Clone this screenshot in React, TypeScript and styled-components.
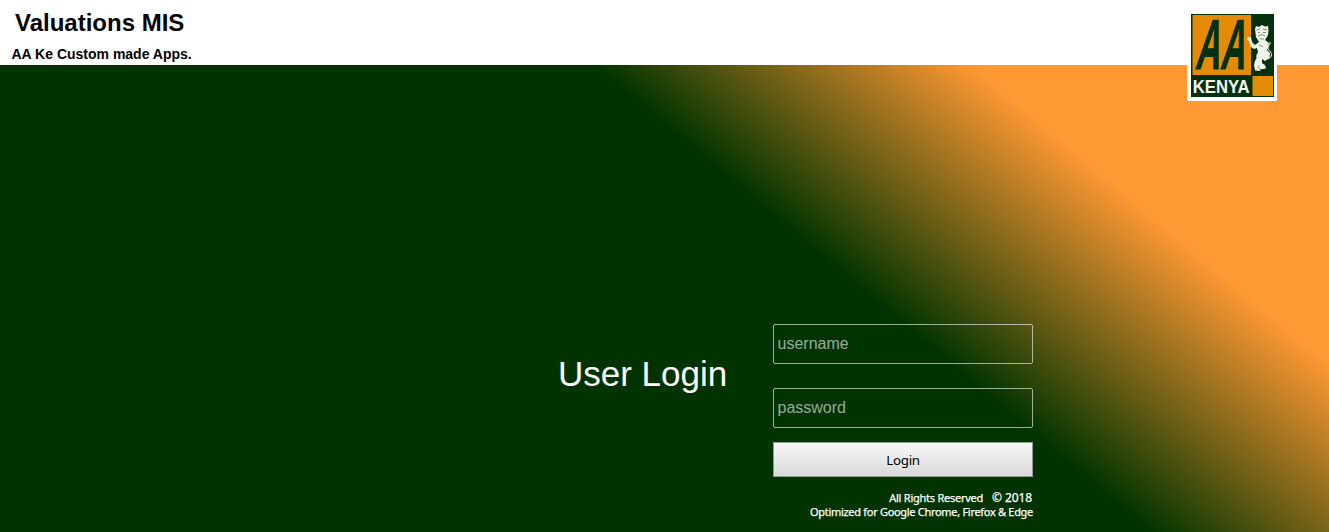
import React from "react";
import styled, { createGlobalStyle } from "styled-components";

const GlobalStyle = createGlobalStyle`
  html, body { margin: 0; padding: 0; overflow: hidden; }
  * { box-sizing: border-box; }
`;

const Page = styled.div`
  display: flex;
  flex-direction: column;
  height: 100vh;
  font-family: "Liberation Sans", Arial, sans-serif;
  background: #fff;
`;

const Header = styled.header`
  position: relative;
  flex: 0 0 65px;
  color: #000;
  font-weight: bold;
`;

const Title = styled.h1`
  margin: 0;
  padding: 8px 0 0 15px;
  font-size: 24px;
  line-height: 29px;
`;

const Tagline = styled.p`
  margin: 0;
  padding: 9px 0 0 11.5px;
  font-size: 14px;
  line-height: 16px;
`;

const LogoFrame = styled.div`
  position: absolute;
  top: 11px;
  right: 52px;
  width: 90px;
  height: 90px;
  padding: 3px 3px 4px 4px;
  background: #fff;

  svg { display: block; overflow: visible; }
`;

const Main = styled.main`
  flex: 1;
  display: flex;
  padding: 259px 0 0 558px;
  background: linear-gradient(40deg, #003300 738px, #ff9933 984px);
`;

const Heading = styled.h2`
  margin: 0;
  width: 215px;
  padding-top: 29px;
  font-size: 35px;
  line-height: 42px;
  font-weight: normal;
  color: #fff;
  white-space: nowrap;
`;

const Form = styled.form`
  display: flex;
  flex-direction: column;
  width: 260px;
`;

const Field = styled.input`
  height: 40px;
  margin: 0 0 24px;
  padding: 0 3.5px;
  border: 1px solid rgba(255, 255, 255, 0.6);
  border-radius: 2px;
  background: transparent;
  color: #fff;
  font: 16px "Liberation Sans", Arial, sans-serif;
  outline: none;

  &::placeholder { color: rgba(255, 255, 255, 0.6); opacity: 1; }
  & + & { margin-bottom: 14px; }
`;

const LoginButton = styled.button`
  height: 35px;
  padding: 1px 0 0;
  border: 1px solid #999;
  background: linear-gradient(#f7f7f7, #dadada);
  color: #000;
  font: 13.33px "Noto Sans", Tahoma, sans-serif;
  letter-spacing: -0.3px;
`;

const Footer = styled.footer`
  display: flex;
  flex-direction: column;
  align-items: flex-end;
  padding-top: 14px;
  font: 11px/14px "Noto Sans", Tahoma, sans-serif;
  letter-spacing: -0.3px;
  color: #fff;
  -webkit-text-stroke: 0.25px #fff;
  white-space: nowrap;
`;

const Rights = styled.div`
  display: flex;
  gap: 9px;
  letter-spacing: -0.25px;
`;

const Year = styled.span`
  font-size: 12px;
  letter-spacing: -0.1px;
  padding-right: 1px;
`;

const LogoLetter = styled.text`
  font: bold 71px "Liberation Sans", Arial, sans-serif;
  fill: #03310f;
  stroke: #03310f;
  stroke-width: 1px;
`;

const LogoName = styled.text`
  font: bold 17.8px "Liberation Sans", Arial, sans-serif;
  fill: #f4f7ef;
`;

function Logo() {
  return (
    <svg width="83" height="83" viewBox="0 0 83 83" aria-label="AA Kenya">
      <rect width="83" height="83" fill="#03310f" />
      <rect x="1.5" y="1" width="58.5" height="60" fill="#e48a05" />
      <rect x="61.5" y="62" width="20.5" height="20" fill="#e48a05" />
      <LogoLetter transform="translate(3.8 55) skewX(-10) scale(0.48 1)">A</LogoLetter>
      <LogoLetter transform="translate(28.8 55) skewX(-10) scale(0.48 1)">A</LogoLetter>
      <LogoName x="1.7" y="78.7" textLength="57" lengthAdjust="spacingAndGlyphs">KENYA</LogoName>
      <g fill="#f0f3e8">
        <path d="M64 15 65 12 68 13 71 11 74 12.5 77 12 77.5 16 77 21 74 26 78 29 77 34 76 36 79 39 78.5 44 74 47 71 45 71 49 74 51 75 54.5 69 55.5 67 51 67 46 65 42 67 38 66 34 63 35 60 33 58 27 56 26 56.5 23 60 23 61 28 64 31 68 28 65 23Z" />
        <path d="M66 43 69 47 67 52 69.5 57 64 56.5 63 51 64 47Z" />
      </g>
      <g fill="none" stroke="#6d8570" strokeWidth="0.9">
        <path d="M65.5 16 69 15M72 15 76 16M67 18.5H69M72 18.5H75M67 22 71 20.5 74 22M69 25H73M68 31 72 33" />
      </g>
      <path d="M77 45C82 43 81 39 78 36 75 33 80 31 79 28" fill="none" stroke="#f0f3e8" strokeWidth="1" />
    </svg>
  );
}

export default function App() {
  return (
    <Page>
      <GlobalStyle />
      <Header>
        <Title>Valuations MIS</Title>
        <Tagline>AA Ke Custom made Apps.</Tagline>
        <LogoFrame><Logo /></LogoFrame>
      </Header>
      <Main>
        <Heading>User Login</Heading>
        <Form onSubmit={(e) => e.preventDefault()}>
          <Field type="text" placeholder="username" />
          <Field type="password" placeholder="password" />
          <LoginButton type="submit">Login</LoginButton>
          <Footer>
            <Rights><span>All Rights Reserved</span><Year>© 2018</Year></Rights>
            <div>Optimized for Google Chrome, Firefox &amp; Edge</div>
          </Footer>
        </Form>
      </Main>
    </Page>
  );
}
